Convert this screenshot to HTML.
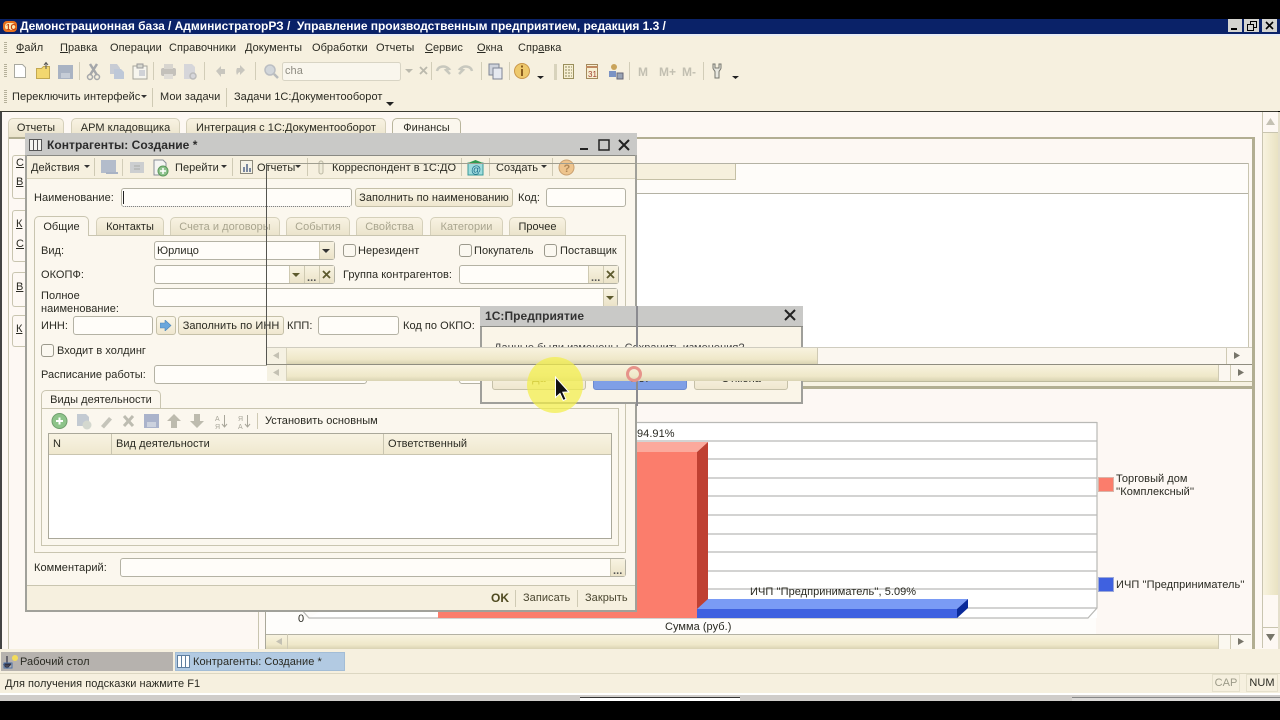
<!DOCTYPE html>
<html lang="ru"><head><meta charset="utf-8"><title>1С</title>
<style>
html,body{margin:0;padding:0;background:#000;}
#p{position:relative;width:1280px;height:720px;overflow:hidden;background:#000;font:11px/16px "Liberation Sans",sans-serif;letter-spacing:.04px;color:#2a2a22;filter:blur(.35px);}
#p div,#p span,#p svg{position:absolute;}
.t{white-space:nowrap;}
.g{color:#a9a58f;}
.w{white-space:nowrap;color:#fff;font-weight:bold;font-size:12px;letter-spacing:-.03px;line-height:14px;}
.i{background:#fffdf9;border:1px solid #b4b2a4;border-radius:3px;box-sizing:border-box;}
.bt{background:linear-gradient(#fbf7ea,#efe7cf);border:1px solid #c5c0a8;border-radius:3px;box-sizing:border-box;text-align:center;line-height:18px;white-space:nowrap;}
.c{background:#fbf8f0;border:1px solid #9b998c;border-radius:3px;box-sizing:border-box;width:13px;height:13px;}
.tab{background:linear-gradient(#f8f2e2,#ebe4cc);border:1px solid #d5d0ba;border-bottom:0;border-radius:5px 5px 0 0;box-sizing:border-box;text-align:center;white-space:nowrap;}
.l{background:#aaa89a;}
.sb{background:linear-gradient(#f8f3df,#efe8c9 70%,#d9d3b3);}
.ddb{background:linear-gradient(#f8f3e2,#ebe3c8);border-left:1px solid #cfcab2;box-sizing:border-box;}
.vs{width:1px;background:#cfcab4;}
u{text-decoration:underline;}
</style></head><body><div id="p">

<!-- main window -->
<div style="left:0;top:19px;width:1280px;height:15px;background:#0a2268"></div>
<div style="left:0;top:34px;width:1280px;height:2px;background:#e8ecf4"></div>
<div style="left:0;top:36px;width:1280px;height:75px;background:#f6f0df"></div>
<div style="left:0;top:111px;width:1278px;height:1px;background:#3a3a30"></div>
<div style="left:0;top:112px;width:1280px;height:537px;background:#fdf8f3"></div>
<div style="left:0;top:112px;width:2px;height:537px;background:#444"></div>
<div style="left:1278px;top:112px;width:2px;height:537px;background:#e4dfcc"></div>

<!-- title -->
<svg style="left:3px;top:20px" width="14" height="13"><rect x="0" y="1" width="14" height="11" rx="4" fill="#e8701c"/><rect x="2" y="3" width="10" height="7" rx="3" fill="#fde7b0"/><text x="3" y="10" font-size="8" font-weight="bold" font-family="Liberation Sans" fill="#c8400c">1С</text></svg>
<span class="w" style="left:20px;top:19px">Демонстрационная база / АдминистраторРЗ /&nbsp; Управление производственным предприятием, редакция 1.3 /</span>
<svg style="left:1228px;top:19px" width="50" height="14"><rect x="0" y="0" width="14" height="13" fill="#d4d4d0"/><rect x="3" y="9" width="6" height="2" fill="#000"/><rect x="16" y="0" width="15" height="13" fill="#d4d4d0"/><path d="M19.5 5.5h6v6h-6zM22.5 5V2.5h6v6H26" fill="none" stroke="#000"/><rect x="34" y="0" width="15" height="13" fill="#d4d4d0"/><path d="M38 3l7 7M45 3l-7 7" stroke="#000" stroke-width="1.6"/></svg>

<!-- grips -->
<div style="left:4px;top:42px;width:3px;height:12px;background:repeating-linear-gradient(#b5b09a 0 1px,transparent 1px 2px)"></div>
<div style="left:4px;top:64px;width:3px;height:14px;background:repeating-linear-gradient(#b5b09a 0 1px,transparent 1px 2px)"></div>
<div style="left:4px;top:90px;width:3px;height:14px;background:repeating-linear-gradient(#b5b09a 0 1px,transparent 1px 2px)"></div>

<!-- menu -->
<span class="t" style="left:16px;top:40px"><u>Ф</u>айл</span>
<span class="t" style="left:60px;top:40px"><u>П</u>равка</span>
<span class="t" style="left:110px;top:40px">Операции</span>
<span class="t" style="left:169px;top:40px">Справочники</span>
<span class="t" style="left:245px;top:40px">Документы</span>
<span class="t" style="left:312px;top:40px">Обработки</span>
<span class="t" style="left:376px;top:40px">Отчеты</span>
<span class="t" style="left:425px;top:40px"><u>С</u>ервис</span>
<span class="t" style="left:477px;top:40px"><u>О</u>кна</span>
<span class="t" style="left:518px;top:40px">Спр<u>а</u>вка</span>

<!-- toolbar 1 -->
<svg style="left:0;top:56px" width="760" height="30">
<g>
<path d="M14.5 8.500h8l3 3v10h-11z" fill="#fff" stroke="#a9a9a0"/>
<path d="M36.500 12.500h5l2-2h6v12h-13z" fill="#f3d76f" stroke="#c3a850"/><path d="M46 13V7M44 9l2-2.500 2 2.500" stroke="#555" fill="none"/>
<rect x="58" y="9" width="15" height="14" fill="#a9b3c3"/><rect x="61" y="17" width="9" height="5" fill="#c5ccd6"/>
<path d="M79.500 6v18" stroke="#d2cdb8"/>
<path d="M90 8l7 11M97 8l-7 11" stroke="#a5a7aa" stroke-width="2.500"/><circle cx="90" cy="21" r="2.500" fill="none" stroke="#a5a7aa" stroke-width="1.500"/><circle cx="97" cy="21" r="2.500" fill="none" stroke="#a5a7aa" stroke-width="1.500"/>
<path d="M110 8h7l3 4v6h-10z" fill="#c8ccd4"/><path d="M114 13h7l3 3v7h-10z" fill="#bec8d8"/>
<rect x="133" y="10" width="14" height="13" fill="#f7f5ee" stroke="#a5a59b"/><rect x="137" y="8" width="6" height="4" fill="#d8d8d0" stroke="#999"/><path d="M139 15h6M139 17h6M139 19h6" stroke="#aab0c0"/>
<path d="M153.500 6v18" stroke="#d2cdb8"/>
<rect x="161" y="12" width="15" height="8" rx="2" fill="#c4c1bb"/><rect x="164" y="8" width="9" height="5" fill="#d8d5cf"/><rect x="164" y="18" width="9" height="5" fill="#e0ddd7"/>
<path d="M184 8h8l3 3v12h-11z" fill="#d6d6da"/><circle cx="193" cy="20" r="3" fill="none" stroke="#bbb" stroke-width="1.500"/>
<path d="M204.500 6v18" stroke="#d2cdb8"/>
<path d="M216 15l5-5v3h4v5h-4v3z" fill="#c8c6be"/>
<path d="M245 14l-5-5v3h-3c-1 2-1 5 0 7 1-2 2-3 3-3v3z" fill="#c8c6be"/>
<path d="M255.500 6v18" stroke="#d2cdb8"/>
<circle cx="270" cy="14" r="5" fill="#d2d6da" stroke="#bbbec3" stroke-width="1.500"/><path d="M274 18l4 4" stroke="#b8bbbb" stroke-width="2.500"/>
</g>
<rect x="282.500" y="6.500" width="118" height="18" rx="2" fill="#f9f6ed" stroke="#d8d4c4"/>
<path d="M405 13h8l-4 4z" fill="#bbb9ad"/>
<path d="M420 11l7 7M427 11l-7 7" stroke="#bbb9ad" stroke-width="1.800"/>
<path d="M431.500 6v18" stroke="#d2cdb8"/>
<path d="M437 15c1-5 8-6 12-2l-3 1 4 4" fill="none" stroke="#c8c8be" stroke-width="2.500"/>
<path d="M472 15c-1-5-8-6-12-2l3 1-4 4" fill="none" stroke="#c8c8be" stroke-width="2.500"/>
<path d="M481.500 6v18" stroke="#d2cdb8"/>
<rect x="489" y="8" width="10" height="11" fill="#cfd3dc" stroke="#7d8494"/><rect x="493" y="12" width="9" height="11" fill="#e6e9f0" stroke="#7d8494"/>
<path d="M509.500 6v18" stroke="#d2cdb8"/>
<circle cx="522" cy="15" r="7.500" fill="#eec96d" stroke="#c9974a"/><rect x="521" y="13" width="2" height="7" fill="#8a5d20"/><rect x="521" y="9.500" width="2" height="2" fill="#8a5d20"/>
<path d="M537 20h7l-3.500 3z" fill="#222"/>
<path d="M554 8h3v16h-3z" fill="#d8d3bc"/>
<rect x="563.500" y="8.500" width="10" height="14" fill="#f7efd2" stroke="#9a8f5c"/><path d="M565 11h7M565 14h7M565 17h7M565 20h7" stroke="#8d8a60" stroke-dasharray="2 1"/>
<rect x="586.500" y="8.500" width="11" height="14" fill="#f7efd2" stroke="#a38a5c"/><path d="M586 11h12" stroke="#c08a60" stroke-width="2"/><text x="588" y="21" font-size="8" fill="#a04030" font-family="Liberation Sans">31</text>
<circle cx="614" cy="11" r="3" fill="#c9a45c"/><rect x="609" y="15" width="7" height="6" fill="#7b93c4"/><rect x="617" y="17" width="6" height="6" fill="#9aa4b5" stroke="#667"/>
<path d="M629.500 6v18" stroke="#d2cdb8"/>
<text x="638" y="20" font-size="12" font-weight="bold" fill="#c2bfb1" font-family="Liberation Sans">М</text>
<text x="659" y="20" font-size="12" font-weight="bold" fill="#c2bfb1" font-family="Liberation Sans">М+</text>
<text x="682" y="20" font-size="12" font-weight="bold" fill="#c2bfb1" font-family="Liberation Sans">М-</text>
<path d="M703.500 6v18" stroke="#d2cdb8"/>
<path d="M713 8v4c0 2 2 2 2 4v6h4v-6c0-2 2-2 2-4V8l-2 0v4h-4V8z" fill="#e8e8e0" stroke="#77776f"/>
<path d="M732 20h7l-3.500 3z" fill="#222"/>
</svg>
<span class="t" style="left:285px;top:63px;color:#8e8c82">cha</span>

<!-- toolbar 2 -->
<span class="t" style="left:12px;top:89px">Переключить интерфейс</span>
<svg style="left:141px;top:95px" width="6" height="4"><path d="M0 0h6L3 3z" fill="#333"/></svg>
<div class="vs" style="left:152px;top:88px;height:19px"></div>
<span class="t" style="left:160px;top:89px">Мои задачи</span>
<div class="vs" style="left:226px;top:88px;height:19px"></div>
<span class="t" style="left:234px;top:89px">Задачи 1С:Документооборот</span>
<svg style="left:386px;top:102px" width="8" height="4"><path d="M0 0h8L4 4z" fill="#222"/></svg>

<!-- page tabs -->
<div class="tab" style="left:8px;top:118px;width:56px;height:19px;line-height:19px">Отчеты</div>
<div class="tab" style="left:71px;top:118px;width:109px;height:19px;line-height:19px">АРМ кладовщика</div>
<div class="tab" style="left:186px;top:118px;width:200px;height:19px;line-height:19px">Интеграция с 1С:Документооборот</div>
<div class="tab" style="left:392px;top:118px;width:69px;height:20px;line-height:19px;background:#fbf7ee;border-color:#b9b59c">Финансы</div>
<div style="left:8px;top:137px;width:1246px;height:2px;background:#b2ae92"></div>
<div style="left:8px;top:137px;width:1px;height:512px;background:#c9c5b0"></div>

<!-- left vertical tabs -->
<div style="left:12px;top:155px;width:14px;height:42px;border:1px solid #c9c5b0;border-right:0;border-radius:3px 0 0 3px"></div>
<div style="left:12px;top:210px;width:14px;height:50px;border:1px solid #c9c5b0;border-right:0;border-radius:3px 0 0 3px"></div>
<div style="left:12px;top:272px;width:14px;height:33px;border:1px solid #c9c5b0;border-right:0;border-radius:3px 0 0 3px"></div>
<div style="left:12px;top:315px;width:14px;height:30px;border:1px solid #c9c5b0;border-right:0;border-radius:3px 0 0 3px"></div>
<span class="t" style="left:16px;top:155px"><u>С</u></span>
<span class="t" style="left:16px;top:174px"><u>В</u></span>
<span class="t" style="left:16px;top:216px"><u>К</u></span>
<span class="t" style="left:16px;top:236px"><u>С</u></span>
<span class="t" style="left:16px;top:279px"><u>В</u></span>
<span class="t" style="left:16px;top:321px"><u>К</u></span>

<!-- right panel upper -->
<div style="left:636px;top:163px;width:612px;height:1px;background:#b4b2a4"></div>
<div style="left:636px;top:164px;width:612px;height:29px;background:#fefcf9"></div>
<div style="left:636px;top:164px;width:99px;height:15px;background:#f6f0dd;border-right:1px solid #c5c0a6;border-bottom:1px solid #c5c0a6"></div>
<div style="left:636px;top:193px;width:612px;height:1px;background:#b4b2a4"></div>
<div style="left:636px;top:194px;width:612px;height:154px;background:#fff"></div>
<div style="left:1248px;top:163px;width:1px;height:225px;background:#c9c5b0"></div>
<div style="left:1252px;top:137px;width:3px;height:512px;background:#b2ae92"></div>

<!-- main scrollbar -->
<div style="left:1262px;top:112px;width:1px;height:536px;background:#c9c5b0"></div>
<div class="sb" style="left:1263px;top:132px;width:15px;height:463px;background:linear-gradient(90deg,#f8f3df,#e9e2c2)"></div>
<div style="left:1263px;top:132px;width:15px;height:1px;background:#c9c5b0"></div>
<div style="left:1263px;top:627px;width:15px;height:1px;background:#c9c5b0"></div>
<svg style="left:1266px;top:118px" width="10" height="8"><path d="M0 7h9L4.500 0z" fill="#c4c1b3"/></svg>
<svg style="left:1266px;top:634px" width="10" height="8"><path d="M0 0h9L4.500 7z" fill="#77756a"/></svg>

<!-- chart -->
<div style="left:265px;top:389px;width:986px;height:245px;background:#fdf8f4"></div>
<div style="left:258px;top:611px;width:1px;height:38px;background:#c9c5b0"></div>
<div style="left:265px;top:611px;width:1px;height:38px;background:#aaa89a"></div>
<div style="left:266px;top:608px;width:830px;height:26px;background:#fefdfb"></div>
<svg style="left:266px;top:415px" width="850" height="220">
<rect x="370" y="7" width="461" height="196" fill="#fff"/>
<path d="M43 203H822l9-10V7.500H370" fill="#fff"/>
<g stroke="#b9b9b6" stroke-width="1.200" fill="none">
<path d="M370 7.500H831M370 26H831M370 44H831M370 63H831M370 81H831M370 100H831M370 119H831M370 137H831M370 156H831M370 174H831M370 193H831"/>
<path d="M831 7V193L822 203H43L34 193"/>
</g>
<rect x="172" y="37" width="259" height="166" fill="#fb7d6c"/>
<path d="M172 37l11-10h259l-11 10z" fill="#fba99c"/>
<path d="M431 37l11-10v166l-11 10z" fill="#bf4032"/>
<rect x="431" y="194" width="260" height="9" fill="#3f61e0"/>
<path d="M431 194l11-10h260l-11 10z" fill="#7a9bf5"/>
<path d="M691 194l11-10v9l-11 10z" fill="#0a2a9a"/>
</svg>
<span class="t" style="left:637px;top:426px">94.91%</span>
<span class="t" style="left:750px;top:584px">ИЧП ''Предприниматель'', 5.09%</span>
<span class="t" style="left:665px;top:619px">Сумма (руб.)</span>
<span class="t" style="left:298px;top:611px">0</span>
<div style="left:1099px;top:478px;width:14px;height:13px;background:#fb7d6c;outline:1px solid #d9b4a8"></div>
<div style="left:1099px;top:578px;width:14px;height:13px;background:#3f61e0;outline:1px solid #9ba8d8"></div>
<span class="t" style="left:1116px;top:471px">Торговый дом</span>
<span class="t" style="left:1116px;top:484px">''Комплексный''</span>
<span class="t" style="left:1116px;top:577px">ИЧП ''Предприниматель''</span>

<!-- bottom hscroll -->
<div class="sb" style="left:266px;top:634px;width:985px;height:15px;border-top:1px solid #b4b2a4;box-sizing:border-box"></div>
<div style="left:287px;top:634px;width:1px;height:15px;background:#cfcab4"></div>
<div style="left:1218px;top:635px;width:33px;height:14px;background:#fbf8f0"></div>
<div style="left:1218px;top:635px;width:1px;height:14px;background:#cfcab4"></div>
<div style="left:1230px;top:635px;width:1px;height:14px;background:#cfcab4"></div>
<svg style="left:276px;top:638px" width="8" height="8"><path d="M6 0v7L0 3.500z" fill="#c4c1b3"/></svg>
<svg style="left:1238px;top:638px" width="8" height="8"><path d="M0 0v7l6-3.500z" fill="#77756a"/></svg>

<!-- task bar / status -->
<div style="left:0;top:649px;width:1280px;height:24px;background:#f6f0df"></div>
<div style="left:1px;top:652px;width:172px;height:19px;background:#b6b2ae"></div>
<div style="left:175px;top:652px;width:170px;height:19px;background:#b2cae2;border:1px solid #a3bdd6;box-sizing:border-box"></div>
<svg style="left:3px;top:654px" width="15" height="15"><path d="M4 2v12M1 10h7M4 14l-3-3h6z" fill="none" stroke="#334" stroke-width="1.200"/><circle cx="12" cy="4" r="3" fill="#f3dc5a"/><rect x="1" y="9" width="8" height="5" fill="none" stroke="#4a70a8"/></svg>
<svg style="left:177px;top:655px" width="13" height="13"><rect x=".5" y=".5" width="12" height="12" fill="#fff" stroke="#5f7f9f"/><path d="M4.500 0v13M8.500 0v13" stroke="#5f7f9f"/></svg>
<span class="t" style="left:20px;top:654px">Рабочий стол</span>
<span class="t" style="left:193px;top:654px">Контрагенты: Создание *</span>
<div style="left:0;top:673px;width:1280px;height:1px;background:#dcd7c2"></div>
<div style="left:0;top:674px;width:1280px;height:19px;background:#f6f0df"></div>
<span class="t" style="left:5px;top:676px">Для получения подсказки нажмите F1</span>
<div style="left:1212px;top:674px;width:28px;height:18px;border:1px solid #e5e0cc;box-sizing:border-box;text-align:center;line-height:16px;color:#9c9a88">CAP</div>
<div style="left:1246px;top:674px;width:32px;height:18px;border:1px solid #e5e0cc;box-sizing:border-box;text-align:center;line-height:16px">NUM</div>
<div style="left:0;top:693px;width:1280px;height:2px;background:#fff"></div>
<div style="left:0;top:695px;width:1280px;height:6px;background:#d0cdca"></div>
<div style="left:580px;top:697px;width:160px;height:4px;background:#fff;border-top:1px solid #333;box-sizing:border-box"></div>
<div style="left:1072px;top:697px;width:208px;height:4px;background:#dcdad8;border-top:1px solid #888;box-sizing:border-box"></div>
<div style="left:0;top:701px;width:1280px;height:19px;background:#000"></div>

<!-- form window -->
<div style="left:25px;top:133px;width:612px;height:479px;background:#fbf7ee;box-sizing:border-box;border:2px solid #a1a19a;border-top:0"></div>
<div style="left:25px;top:133px;width:612px;height:22px;background:#c9c9c7"></div>
<svg style="left:29px;top:139px" width="13" height="12"><rect x=".5" y=".5" width="12" height="11" fill="#f5f5f0" stroke="#555"/><path d="M4.500 0v12M8.500 0v12" stroke="#555"/></svg>
<span class="t" style="left:47px;top:137px;font-weight:bold;font-size:12px;color:#2b2b2b">Контрагенты: Создание *</span>
<svg style="left:578px;top:137px" width="54" height="16"><rect x="2" y="11" width="8" height="2" fill="#222"/><rect x="21" y="3" width="10" height="10" fill="none" stroke="#222" stroke-width="1.500"/><path d="M41 3l10 10M51 3L41 13" stroke="#222" stroke-width="2"/></svg>
<div style="left:27px;top:155px;width:608px;height:24px;background:#f6f0df;border-top:1px solid #8a8a84;border-bottom:1px solid #d8d3bc;box-sizing:border-box"></div>
<span class="t" style="left:31px;top:160px">Действия</span><svg style="left:84px;top:165px" width="6" height="4"><path d="M0 0h6L3 3z" fill="#333"/></svg>
<div class="vs" style="left:94px;top:158px;height:18px"></div>
<svg style="left:100px;top:157px" width="90" height="21"><rect x="1" y="3" width="15" height="13" fill="#b3bccb"/><path d="M6 16h12" stroke="#a8b2c4" stroke-width="2"/><path d="M22.500 2v17" stroke="#d2cdb8"/><rect x="30" y="5" width="14" height="11" fill="#ccced0"/><path d="M34 9h6M34 12h6" stroke="#a9aba6"/><path d="M54 3h9l3 3v12H54z" fill="#f5f5f2" stroke="#8a8f98"/><circle cx="63" cy="14" r="5" fill="#8ec28d" stroke="#5c9a5a"/><path d="M60 14h6M63 11v6" stroke="#fff" stroke-width="1.500"/></svg>
<span class="t" style="left:175px;top:160px">Перейти</span><svg style="left:221px;top:165px" width="6" height="4"><path d="M0 0h6L3 3z" fill="#333"/></svg>
<div class="vs" style="left:232px;top:158px;height:18px"></div>
<svg style="left:240px;top:160px" width="14" height="15"><rect x=".5" y=".5" width="12" height="13" fill="#f5f2e6" stroke="#8d8a7c"/><path d="M3 12V7h2v5zM6 12V4h2v8zM9 12V8h2v4z" fill="#7a88a0"/></svg>
<span class="t" style="left:257px;top:160px">Отчеты</span><svg style="left:295px;top:165px" width="6" height="4"><path d="M0 0h6L3 3z" fill="#333"/></svg>
<div class="vs" style="left:307px;top:158px;height:18px"></div>
<svg style="left:318px;top:160px" width="6" height="15"><rect x="1" y="1" width="4" height="13" rx="2" fill="#efebd8" stroke="#bdb9a4"/></svg>
<span class="t" style="left:332px;top:160px">Корреспондент в 1С:ДО</span>
<div class="vs" style="left:461px;top:158px;height:18px"></div>
<svg style="left:467px;top:159px" width="18" height="17"><rect x="1" y="4" width="15" height="12" fill="#9fdcdc" stroke="#3a9a9a"/><path d="M1 4l7.500-3L16 4z" fill="#2f9a50"/><text x="4" y="14" font-size="10" fill="#1a6a8a" font-family="Liberation Sans">@</text></svg>
<div class="vs" style="left:489px;top:158px;height:18px"></div>
<span class="t" style="left:496px;top:160px">Создать</span><svg style="left:541px;top:165px" width="6" height="4"><path d="M0 0h6L3 3z" fill="#333"/></svg>
<div class="vs" style="left:552px;top:158px;height:18px"></div>
<svg style="left:558px;top:159px" width="17" height="17"><circle cx="8.500" cy="8.500" r="7.500" fill="#eec48d" stroke="#c9a070"/><text x="5.500" y="13" font-size="11" font-weight="bold" fill="#b08858" font-family="Liberation Sans">?</text></svg>

<span class="t" style="left:34px;top:190px">Наименование:</span>
<div class="i" style="left:121px;top:188px;width:231px;height:19px;border-bottom:1px dotted #666"></div>
<div style="left:123px;top:191px;width:1px;height:13px;background:#222"></div>
<div class="bt" style="left:355px;top:188px;width:158px;height:19px">Заполнить по наименованию</div>
<span class="t" style="left:518px;top:190px">Код:</span>
<div class="i" style="left:546px;top:188px;width:80px;height:19px"></div>

<div style="left:34px;top:235px;width:592px;height:318px;border:1px solid #c9c5b0;box-sizing:border-box"></div>
<div class="tab" style="left:34px;top:216px;width:55px;height:20px;line-height:20px;background:#fbf7ee;border-color:#c9c5b0">Общие</div>
<div class="tab" style="left:96px;top:217px;width:68px;height:18px;line-height:18px">Контакты</div>
<div class="tab g" style="left:170px;top:217px;width:110px;height:18px;line-height:18px">Счета и договоры</div>
<div class="tab g" style="left:286px;top:217px;width:64px;height:18px;line-height:18px">События</div>
<div class="tab g" style="left:356px;top:217px;width:67px;height:18px;line-height:18px">Свойства</div>
<div class="tab g" style="left:430px;top:217px;width:73px;height:18px;line-height:18px">Категории</div>
<div class="tab" style="left:509px;top:217px;width:57px;height:18px;line-height:18px">Прочее</div>

<span class="t" style="left:41px;top:243px">Вид:</span>
<div class="i" style="left:154px;top:241px;width:181px;height:19px"></div>
<span class="t" style="left:157px;top:243px">Юрлицо</span>
<div class="ddb" style="left:319px;top:242px;width:15px;height:17px"></div>
<svg style="left:322px;top:249px" width="9" height="5"><path d="M0 0h8L4 4z" fill="#333"/></svg>
<div class="c" style="left:343px;top:244px"></div><span class="t" style="left:358px;top:243px">Нерезидент</span>
<div class="c" style="left:459px;top:244px"></div><span class="t" style="left:474px;top:243px">Покупатель</span>
<div class="c" style="left:544px;top:244px"></div><span class="t" style="left:560px;top:243px">Поставщик</span>

<span class="t" style="left:41px;top:267px">ОКОПФ:</span>
<div class="i" style="left:154px;top:265px;width:181px;height:19px"></div>
<div class="ddb" style="left:289px;top:266px;width:45px;height:17px"></div>
<div style="left:304px;top:266px;width:1px;height:17px;background:#cfcab2"></div>
<div style="left:319px;top:266px;width:1px;height:17px;background:#cfcab2"></div>
<svg style="left:292px;top:273px" width="9" height="5"><path d="M0 0h8L4 4z" fill="#5d5a2e"/></svg>
<span class="t" style="left:307px;top:270px;font-weight:bold;color:#555">...</span>
<svg style="left:322px;top:270px" width="10" height="10"><path d="M1 1l7 7M8 1L1 8" stroke="#5d5a2e" stroke-width="1.800"/></svg>
<span class="t" style="left:343px;top:267px">Группа контрагентов:</span>
<div class="i" style="left:459px;top:265px;width:160px;height:19px"></div>
<div class="ddb" style="left:588px;top:266px;width:30px;height:17px"></div>
<div style="left:603px;top:266px;width:1px;height:17px;background:#cfcab2"></div>
<span class="t" style="left:591px;top:270px;font-weight:bold;color:#555">...</span>
<svg style="left:606px;top:270px" width="10" height="10"><path d="M1 1l7 7M8 1L1 8" stroke="#5d5a2e" stroke-width="1.800"/></svg>

<span class="t" style="left:41px;top:288px">Полное</span>
<span class="t" style="left:41px;top:301px">наименование:</span>
<div class="i" style="left:153px;top:288px;width:465px;height:19px"></div>
<div class="ddb" style="left:603px;top:289px;width:14px;height:17px"></div>
<svg style="left:606px;top:296px" width="9" height="5"><path d="M0 0h8L4 4z" fill="#5d5a2e"/></svg>

<span class="t" style="left:41px;top:318px">ИНН:</span>
<div class="i" style="left:73px;top:316px;width:80px;height:19px"></div>
<div class="bt" style="left:156px;top:316px;width:20px;height:19px"></div>
<svg style="left:160px;top:320px" width="12" height="11"><path d="M0 3h5V0l6 5.500L5 11V8H0z" fill="#6aa7dc" stroke="#4d86b8" stroke-width=".6"/></svg>
<div class="bt" style="left:178px;top:316px;width:106px;height:19px">Заполнить по ИНН</div>
<span class="t" style="left:287px;top:318px">КПП:</span>
<div class="i" style="left:318px;top:316px;width:81px;height:19px"></div>
<span class="t" style="left:403px;top:318px">Код по ОКПО:</span>

<div class="c" style="left:41px;top:344px"></div><span class="t" style="left:57px;top:343px">Входит в холдинг</span>
<span class="t" style="left:41px;top:367px">Расписание работы:</span>
<div class="i" style="left:154px;top:365px;width:213px;height:19px"></div>
<div class="i" style="left:459px;top:365px;width:160px;height:19px"></div>

<div class="tab" style="left:41px;top:390px;width:120px;height:19px;line-height:18px;background:#fbf7ee;border-color:#c9c5b0">Виды деятельности</div>
<div style="left:41px;top:408px;width:578px;height:138px;border:1px solid #c9c5b0;box-sizing:border-box"></div>
<div style="left:42px;top:409px;width:119px;height:1px;background:#fbf7ee"></div>
<svg style="left:48px;top:411px" width="215" height="20">
<circle cx="11.500" cy="10" r="7.500" fill="#8ec48a" stroke="#6f9e6d"/><path d="M8 10h7M11.500 6.500v7" stroke="#fff" stroke-width="2"/>
<path d="M29 3h9l3 3v9H29z" fill="#c3cad2"/><circle cx="39" cy="14" r="4.500" fill="#d4d8cf"/>
<path d="M53 15l8-9 3 2.500-8 9z" fill="#c5c4ba"/>
<path d="M76 5l9 10M85 5l-9 10" stroke="#bdbcb1" stroke-width="3"/>
<rect x="96" y="3" width="15" height="14" fill="#aab3cb"/><rect x="99" y="11" width="9" height="5" fill="#ccd2de"/>
<path d="M126 3l7 7h-4v7h-6v-7h-4z" fill="#bdbbae"/>
<path d="M149 17l7-7h-4V3h-6v7h-4z" fill="#bdbbae"/>
<text x="167" y="10" font-size="7" fill="#a8a69a" font-family="Liberation Sans">А</text><text x="167" y="18" font-size="7" fill="#a8a69a" font-family="Liberation Sans">Я</text><path d="M176.500 4v12M174 13l2.500 3 2.500-3" stroke="#a8a69a" fill="none"/>
<text x="190" y="10" font-size="7" fill="#a8a69a" font-family="Liberation Sans">Я</text><text x="190" y="18" font-size="7" fill="#a8a69a" font-family="Liberation Sans">А</text><path d="M199.500 4v12M197 13l2.500 3 2.500-3" stroke="#a8a69a" fill="none"/>
<path d="M209.500 2v16" stroke="#cfcab4"/>
</svg>
<span class="t" style="left:265px;top:413px">Установить основным</span>

<div style="left:48px;top:433px;width:564px;height:106px;background:#fff;border:1px solid #aaa89a;box-sizing:border-box"></div>
<div style="left:49px;top:434px;width:562px;height:21px;background:linear-gradient(#f8f3e2,#efe8cf);border-bottom:1px solid #c9c5b0;box-sizing:border-box"></div>
<div style="left:111px;top:434px;width:1px;height:21px;background:#c9c5b0"></div>
<div style="left:383px;top:434px;width:1px;height:21px;background:#c9c5b0"></div>
<span class="t" style="left:53px;top:436px">N</span>
<span class="t" style="left:116px;top:436px">Вид деятельности</span>
<span class="t" style="left:388px;top:436px">Ответственный</span>

<span class="t" style="left:34px;top:560px">Комментарий:</span>
<div class="i" style="left:120px;top:558px;width:506px;height:19px"></div>
<div class="ddb" style="left:610px;top:559px;width:15px;height:17px"></div>
<span class="t" style="left:613px;top:563px;font-weight:bold;color:#555">...</span>
<div style="left:27px;top:585px;width:608px;height:1px;background:#c9c5b0"></div>
<div style="left:27px;top:586px;width:608px;height:24px;background:#f6f0df"></div>
<span class="t" style="left:491px;top:590px;font-weight:bold;font-size:12px;color:#4f4a20">OK</span>
<div class="vs" style="left:515px;top:590px;height:17px"></div>
<span class="t" style="left:523px;top:590px;color:#4a4630">Записать</span>
<div class="vs" style="left:577px;top:590px;height:17px"></div>
<span class="t" style="left:585px;top:590px;color:#4a4630">Закрыть</span>

<!-- message dialog -->
<div style="left:480px;top:306px;width:323px;height:98px;background:#faf5e8;border:2px solid #9f9f9a;border-top:0;box-sizing:border-box"></div>
<div style="left:480px;top:306px;width:323px;height:20px;background:#c9c9c7;border-bottom:1px solid #8a8a84;box-sizing:content-box"></div>
<span class="t" style="left:485px;top:308px;font-weight:bold;color:#333;font-size:12px">1С:Предприятие</span>
<svg style="left:783px;top:308px" width="14" height="14"><path d="M2 2l10 10M12 2L2 12" stroke="#222" stroke-width="2"/></svg>
<span class="t" style="left:494px;top:340px;color:#444">Данные были изменены. Сохранить изменения?</span>
<div class="bt" style="left:492px;top:368px;width:94px;height:22px;line-height:20px;color:#8a7a30">Да</div>
<div class="bt" style="left:593px;top:368px;width:94px;height:22px;line-height:20px;background:#7f9fe6;border-color:#6d8bd0">Нет</div>
<div class="bt" style="left:694px;top:368px;width:94px;height:22px;line-height:20px">Отмена</div>

<!-- vertical line & form right edge -->
<div style="left:636px;top:306px;width:2px;height:100px;background:#8b8b90"></div>
<div style="left:266px;top:163px;width:1px;height:202px;background:#555550"></div>
<div style="left:266px;top:163px;width:370px;height:1px;background:#a09e90"></div>

<!-- ghost scroll strips -->
<div style="left:267px;top:347px;width:985px;height:1px;background:#cfccbf"></div>
<div style="left:267px;top:348px;width:985px;height:16px;background:#fbf7f0"></div>
<div class="sb" style="left:287px;top:348px;width:530px;height:16px"></div>
<div style="left:267px;top:348px;width:20px;height:16px;background:#f5f1e2;border-right:1px solid #d8d3bc;box-sizing:border-box"></div>
<div style="left:817px;top:348px;width:1px;height:16px;background:#cfcab4"></div>
<div style="left:1226px;top:348px;width:1px;height:16px;background:#cfcab4"></div>
<svg style="left:273px;top:352px" width="8" height="8"><path d="M6 0v7L0 3.500z" fill="#c4c1b3"/></svg>
<svg style="left:1234px;top:352px" width="8" height="8"><path d="M0 0v7l6-3.500z" fill="#77756a"/></svg>
<div style="left:267px;top:364px;width:985px;height:1px;background:#8f8d80"></div>
<div class="sb" style="left:267px;top:365px;width:985px;height:16px"></div>
<div style="left:267px;top:365px;width:20px;height:16px;background:#f5f1e2;border-right:1px solid #d8d3bc;box-sizing:border-box"></div>
<div style="left:1218px;top:365px;width:34px;height:16px;background:#fbf7f0"></div>
<div style="left:1218px;top:365px;width:1px;height:16px;background:#cfcab4"></div>
<div style="left:1230px;top:365px;width:1px;height:16px;background:#cfcab4"></div>
<svg style="left:273px;top:369px" width="8" height="8"><path d="M6 0v7L0 3.500z" fill="#c4c1b3"/></svg>
<svg style="left:1238px;top:369px" width="8" height="8"><path d="M0 0v7l6-3.500z" fill="#77756a"/></svg>
<div style="left:803px;top:381px;width:449px;height:6px;background:#f7f2e2"></div>
<div style="left:803px;top:386px;width:449px;height:3px;background:#b2ae92"></div>
<div style="left:803px;top:381px;width:449px;height:1px;background:#bdb99c"></div>

<!-- highlight & cursor -->
<svg style="left:520px;top:350px" width="130" height="70">
<circle cx="35" cy="35" r="28" fill="#f3ef4a" fill-opacity=".72"/>
<circle cx="114" cy="24" r="6.500" fill="none" stroke="#e6938a" stroke-width="3"/>
<path d="M35.500 27v20.500l4.500-4 3.200 7 2.800-1.300-3.200-7 6-.3z" fill="#111" stroke="#fff" stroke-width="1"/>
</svg>
</div></body></html>
